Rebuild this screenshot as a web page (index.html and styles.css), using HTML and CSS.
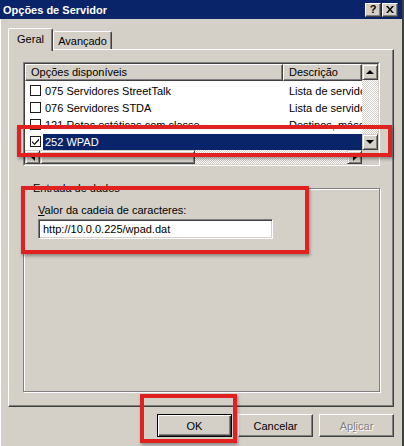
FILE: index.html
```html
<!DOCTYPE html>
<html lang="pt">
<head>
    <meta charset="UTF-8">
    <title>Opções de Servidor</title>
    <link rel="stylesheet" href="styles.css">
</head>
<body>
    <div class="dialog">
        <div class="titlebar">
            <span class="title">Opções de Servidor</span>
            <div class="caption-buttons">
                <span class="cap-btn help">?</span>
                <span class="cap-btn close">
                    <svg width="8" height="7" viewBox="0 0 8 7"><path d="M0 0h2l2 2.5L6 0h2L5 3.5 8 7H6L4 4.5 2 7H0l3-3.5z" fill="#000"/></svg>
                </span>
            </div>
        </div>

        <div class="tabs">
            <div class="tab active">Geral</div>
            <div class="tab">Avançado</div>
        </div>

        <div class="panel">
            <!-- list of options -->
            <div class="listview">
                <div class="lv-inner">
                    <div class="lv-main">
                        <div class="lv-header">
                            <div class="hcol col-name">Opções disponíveis</div>
                            <div class="hcol col-desc">Descrição</div>
                        </div>
                        <div class="lv-rows">
                            <div class="row">
                                <span class="check"></span>
                                <span class="cell-name">075 Servidores StreetTalk</span>
                                <span class="cell-desc">Lista de servidores</span>
                            </div>
                            <div class="row">
                                <span class="check"></span>
                                <span class="cell-name">076 Servidores STDA</span>
                                <span class="cell-desc">Lista de servidores</span>
                            </div>
                            <div class="row">
                                <span class="check"></span>
                                <span class="cell-name">121 Rotas estáticas com classe</span>
                                <span class="cell-desc">Destinos, máscaras</span>
                            </div>
                            <div class="row selected">
                                <span class="check checked">
                                    <svg width="9" height="9" viewBox="0 0 9 9"><path d="M1 4l2.5 2.5L8 1.5v2L3.5 8 1 5.5z" fill="#000"/></svg>
                                </span>
                                <span class="cell-name">252 WPAD</span>
                                <span class="cell-desc"></span>
                            </div>
                        </div>
                    </div>
                    <div class="vscroll">
                        <div class="sbtn"><span class="arrow up"></span></div>
                        <div class="strack"></div>
                        <div class="sbtn"><span class="arrow down"></span></div>
                    </div>
                    <div class="hscroll">
                        <div class="sbtn"><span class="arrow left"></span></div>
                        <div class="sthumb"></div>
                        <div class="strack"></div>
                        <div class="sbtn"><span class="arrow right"></span></div>
                    </div>
                    <div class="corner"></div>
                </div>
            </div>

            <fieldset class="groupbox">
                <legend>Entrada de dados</legend>
                <div class="field-label"><u>V</u>alor da cadeia de caracteres:</div>
                <div class="textbox">http://10.0.0.225/wpad.dat</div>
            </fieldset>
        </div>

        <div class="buttons">
            <div class="btn default">OK</div>
            <div class="btn">Cancelar</div>
            <div class="btn disabled">Ap<u>l</u>icar</div>
        </div>

        <!-- red highlight boxes drawn over the dialog -->
        <div class="mark mark-list"></div>
        <div class="mark mark-input"></div>
        <div class="mark mark-ok"></div>
    </div>
</body>
</html>
```

FILE: styles.css
```css
* {
    box-sizing: border-box;
}

body {
    margin: 0;
    background-color: #D4D0C8;
    font-family: "Liberation Sans", Arial, sans-serif;
    font-size: 11px;
    color: #000;
}

.dialog {
    position: relative;
    width: 404px;
    height: 446px;
    background-color: #D4D0C8;
    border-right: 2px solid #404040;
    box-shadow: inset 1px 0 #FFFFFF;
    overflow: hidden;
}

/* title bar */
.titlebar {
    height: 19px;
    background-color: #0A246A;
    color: white;
    display: flex;
    align-items: center;
    justify-content: space-between;
    padding: 0 4px 0 3px;
}

.title {
    font-weight: bold;
    font-size: 11px;
}

.caption-buttons {
    display: flex;
    gap: 1px;
}

.cap-btn {
    width: 16px;
    height: 14px;
    background-color: #D4D0C8;
    border: 1px solid;
    border-color: #FFFFFF #404040 #404040 #FFFFFF;
    box-shadow: inset -1px -1px #808080;
    color: #000;
    font-weight: bold;
    font-size: 11px;
    display: flex;
    align-items: center;
    justify-content: center;
    line-height: 1;
}

/* tabs */
.tabs {
    position: relative;
    z-index: 1;
    display: flex;
    align-items: flex-end;
    height: 21px;
    margin: 9px 0 0 8px;
}

.tab {
    height: 18px;
    width: 59px;
    border: 1px solid;
    border-bottom: none;
    border-color: #FFFFFF #404040 transparent #FFFFFF;
    border-radius: 2px 2px 0 0;
    box-shadow: inset -1px 0 #808080;
    display: flex;
    align-items: center;
    justify-content: center;
    background-color: #D4D0C8;
}

.tab.active {
    width: 45px;
    height: 23px;
    margin-bottom: -2px;
    padding-bottom: 3px;
}

/* tab page */
.panel {
    width: 386px;
    height: 358px;
    margin-left: 8px;
    border: 1px solid;
    border-color: #FFFFFF #404040 #404040 #FFFFFF;
    box-shadow: inset -1px -1px #808080;
    padding: 12px 0 0 14px;
}

/* list view */
.listview {
    width: 357px;
    height: 104px;
    border: 1px solid;
    border-color: #808080 #FFFFFF #FFFFFF #808080;
}

.lv-inner {
    height: 100%;
    border: 1px solid;
    border-color: #404040 #D4D0C8 #D4D0C8 #404040;
    display: grid;
    grid-template-columns: 1fr 16px;
    grid-template-rows: 1fr 14px;
    background-color: white;
}

.lv-main {
    overflow: hidden;
}

.lv-header {
    display: flex;
    height: 17px;
}

.hcol {
    height: 17px;
    background-color: #D4D0C8;
    border: 1px solid;
    border-color: #FFFFFF #404040 #404040 #FFFFFF;
    box-shadow: inset -1px -1px #808080;
    padding: 1px 0 0 5px;
    white-space: nowrap;
}

.col-name {
    width: 258px;
}

.col-desc {
    flex: 1;
}

.lv-rows {
    height: 69px;
    padding-top: 1px;
    overflow: hidden;
}

.row {
    display: flex;
    align-items: center;
    height: 17px;
    white-space: nowrap;
}

.check {
    width: 11px;
    height: 11px;
    margin: 0 2px 0 5px;
    border: 1px solid #1C1C1C;
    background-color: white;
    display: flex;
    align-items: center;
    justify-content: center;
    flex-shrink: 0;
}

.cell-name {
    width: 240px;
    padding-left: 2px;
    overflow: hidden;
}

.cell-desc {
    flex: 1;
    padding-left: 6px;
    overflow: hidden;
}

.row.selected .cell-name,
.row.selected .cell-desc {
    height: 16px;
    line-height: 16px;
    background-color: #0A246A;
    color: white;
}

/* scroll bars */
.vscroll {
    display: flex;
    flex-direction: column;
}

.hscroll {
    display: flex;
}

.sbtn,
.sthumb,
.corner {
    background-color: #D4D0C8;
}

.sbtn,
.sthumb {
    border: 1px solid;
    border-color: #D4D0C8 #404040 #404040 #D4D0C8;
    box-shadow: inset 1px 1px #FFFFFF, inset -1px -1px #808080;
    display: flex;
    align-items: center;
    justify-content: center;
}

.vscroll .sbtn {
    height: 16px;
}

.hscroll .sbtn {
    width: 15px;
}

.sthumb {
    width: 155px;
}

.strack {
    flex: 1;
    background-color: #EDEBE7;
    background-image: repeating-conic-gradient(#FFFFFF 0 25%, #D4D0C8 0 50%);
    background-size: 2px 2px;
}

.arrow {
    width: 0;
    height: 0;
    border: 4px solid transparent;
}

.arrow.up {
    border-top: none;
    border-bottom-color: #000;
}

.arrow.down {
    border-bottom: none;
    border-top-color: #000;
}

.arrow.left {
    border-left: none;
    border-right-color: #000;
}

.arrow.right {
    border-right: none;
    border-left-color: #000;
}

/* group box */
.groupbox {
    width: 357px;
    height: 210px;
    margin: 16px 0 0 0;
    padding: 0 14px;
    border: 1px solid #808080;
    box-shadow: 1px 1px 0 #FFFFFF, inset 1px 1px 0 #FFFFFF;
}

.groupbox legend {
    margin-left: -7px;
    padding: 0 2px;
    line-height: 13px;
    background-color: #D4D0C8;
}

.field-label {
    margin-top: 9px;
    line-height: 13px;
}

.textbox {
    width: 235px;
    height: 20px;
    margin-top: 2px;
    background-color: white;
    border: 1px solid;
    border-color: #808080 #FFFFFF #FFFFFF #808080;
    box-shadow: inset 1px 1px #404040, inset -1px -1px #D4D0C8;
    padding: 3px 0 0 4px;
    white-space: nowrap;
}

/* dialog buttons */
.buttons {
    display: flex;
    justify-content: flex-end;
    gap: 6px;
    padding: 7px 8px 0 0;
}

.btn {
    width: 75px;
    height: 23px;
    border: 1px solid;
    border-color: #FFFFFF #404040 #404040 #FFFFFF;
    box-shadow: inset -1px -1px #808080;
    display: flex;
    align-items: center;
    justify-content: center;
}

.btn.default {
    border-color: #000;
    box-shadow: inset 1px 1px #FFFFFF, inset -1px -1px #404040, inset -2px -2px #808080;
}

.btn.disabled {
    color: #808080;
    text-shadow: 1px 1px #FFFFFF;
}

/* red annotation boxes */
.mark {
    position: absolute;
    border: 4px solid #E0211F;
    box-shadow: 1px 2px 3px rgba(0, 0, 0, 0.35);
}

.mark-list {
    left: 17px;
    top: 125px;
    width: 375px;
    height: 32px;
}

.mark-input {
    left: 21px;
    top: 186px;
    width: 288px;
    height: 68px;
}

.mark-ok {
    left: 140px;
    top: 394px;
    width: 97px;
    height: 49px;
}
```
